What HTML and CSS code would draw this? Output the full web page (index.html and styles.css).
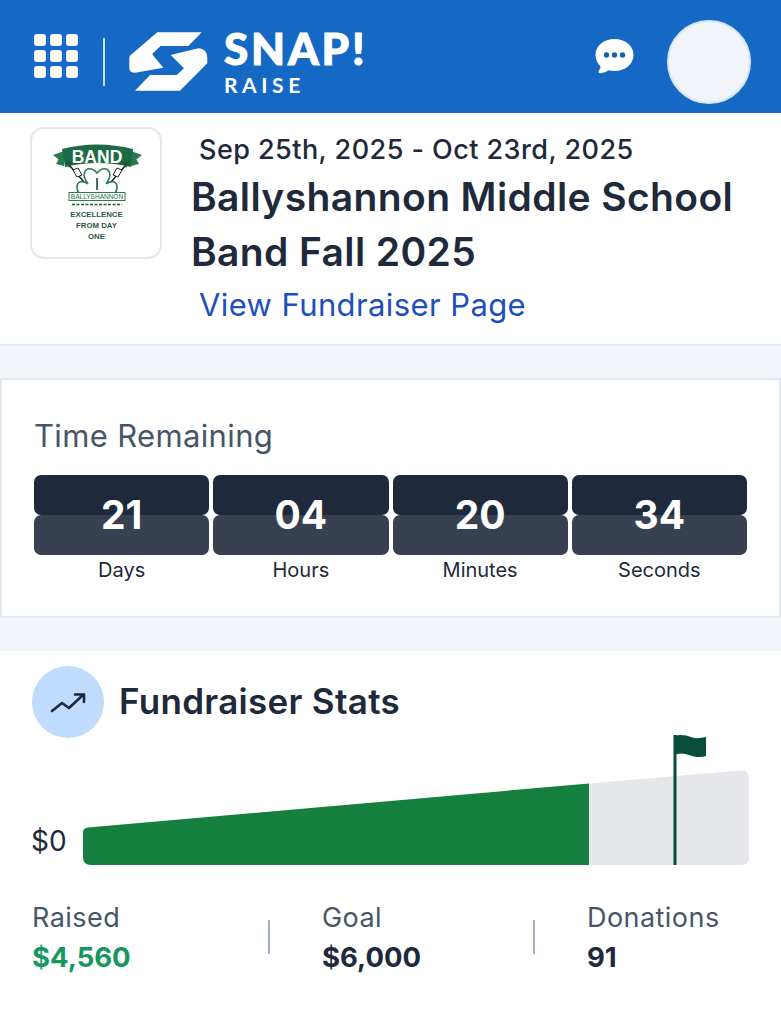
FILE: index.html
```html
<!DOCTYPE html>
<html lang="en">
<head>
<meta charset="utf-8">
<title>Snap! Raise</title>
<link rel="stylesheet" href="styles.css">
</head>
<body>
<header class="topbar">
  <div class="topbar-left">
    <div class="apps">
      <i></i><i></i><i></i><i></i><i></i><i></i><i></i><i></i><i></i>
    </div>
    <div class="divider"></div>
    <svg class="mark" width="100" height="80" viewBox="0 0 100 80">
      <path fill="#fff" d="M37.300 12.300H81.700L68.300 26H40.500L32.700 33.500V35L43.300 47.700L15 52.700Q9.300 52.700 9.300 48V38Q9.300 36.500 10.500 35.300Z"/>
      <path fill="#fff" d="M50.700 35L78.300 28.300Q87.300 29 87.300 38V43.300L60 70.700H15L30 55H56.700L64 48.300Z"/>
    </svg>
    <div class="wordmark">
      <span class="snap">SNAP!</span>
      <span class="raise">RAISE</span>
    </div>
  </div>
  <div class="topbar-right">
    <svg class="chat" width="40" height="38" viewBox="0 0 40 38">
      <path fill="#fff" d="M20.500 1C10 1 1.500 7.500 1.500 17C1.500 21.500 3.500 25.500 6.500 28.300C6.500 30.500 5.500 32 4.700 33C4 34 4.800 35.500 6.500 35.300C9.500 35 12.500 33.700 14.500 32.300C16.300 32.800 18.300 33 20.500 33C31 33 39.500 26.500 39.500 17C39.500 7.500 31 1 20.500 1Z"/>
      <circle cx="12.500" cy="17" r="2.700" fill="#1b5fa8"/>
      <circle cx="20.500" cy="17" r="2.700" fill="#1b5fa8"/>
      <circle cx="28.500" cy="17" r="2.700" fill="#1b5fa8"/>
    </svg>
    <div class="avatar"></div>
  </div>
</header>

<section class="summary">
  <div class="badge">
    <svg class="crest" width="100" height="104" viewBox="0 0 100 104">
      <path fill="#2a7a52" d="M7 16L18 12V27L10 25L12.500 20.500Z"/>
      <path fill="#2a7a52" d="M96 16L85 12V27L93 25L90.500 20.500Z"/>
      <path fill="#1d6b42" d="M16 10Q51 1 87 10L85 28Q51 20 19 28Z"/>
      <text class="band" x="51" y="23.500" text-anchor="middle">BAND</text>
      <path d="M24 27L38 43M79 27L65 43" stroke="#222" stroke-width="1.500" fill="none"/>
      <path d="M27 31L32 29L36 36L31 38ZM76 31L71 29L67 36L72 38Z" fill="#fff" stroke="#222" stroke-width="1"/>
      <path d="M19 22L27 23L23 29ZM84 22L76 23L80 29Z" fill="#1d5a3a"/>
      <path d="M51 34C46 28 39 28 38 36C38 39 40 42 42 45C37 41 31 42 31 48C31 51 32 53 33 54H69C70 53 71 51 71 48C71 42 65 41 60 45C62 42 64 39 64 36C63 28 56 28 51 34Z" fill="none" stroke="#2a7a55" stroke-width="1.600"/>
      <path d="M51 39V51" stroke="#1d4f38" stroke-width="1.600"/>
      <rect x="23" y="53.500" width="56" height="8" fill="#fff" stroke="#2a7a55" stroke-width="1"/>
      <text class="badge-name" x="51" y="60" text-anchor="middle">BALLYSHANNON</text>
      <path d="M26 65.500H76" stroke="#1d5a3a" stroke-width="1.600" stroke-dasharray="3 1.500"/>
      <text class="badge-line" x="50.500" y="77.500" text-anchor="middle">EXCELLENCE</text>
      <text class="badge-line" x="50.500" y="89" text-anchor="middle">FROM DAY</text>
      <text class="badge-line" x="50.500" y="100" text-anchor="middle">ONE</text>
    </svg>
  </div>
  <div class="summary-text">
    <p class="dates">Sep 25th, 2025 - Oct 23rd, 2025</p>
    <h1 class="title">Ballyshannon Middle School Band Fall 2025</h1>
    <a class="page-link" href="#">View Fundraiser Page</a>
  </div>
</section>

<section class="timer">
  <h2 class="timer-title">Time Remaining</h2>
  <div class="timer-grid">
    <div class="unit"><div class="flip"><span class="flip-top"></span><span class="flip-bottom"></span><b class="flip-num">21</b></div><span class="unit-label">Days</span></div>
    <div class="unit"><div class="flip"><span class="flip-top"></span><span class="flip-bottom"></span><b class="flip-num">04</b></div><span class="unit-label">Hours</span></div>
    <div class="unit"><div class="flip"><span class="flip-top"></span><span class="flip-bottom"></span><b class="flip-num">20</b></div><span class="unit-label">Minutes</span></div>
    <div class="unit"><div class="flip"><span class="flip-top"></span><span class="flip-bottom"></span><b class="flip-num">34</b></div><span class="unit-label">Seconds</span></div>
  </div>
</section>

<section class="stats">
  <div class="stats-head">
    <div class="stats-icon">
      <svg width="40" height="40" viewBox="0 0 40 40" fill="none" stroke="#1e293b" stroke-width="2.600" stroke-linecap="round" stroke-linejoin="round">
        <path d="M4 29L14 21L21 26L35 13"/>
        <path d="M27 12.500H36V20"/>
      </svg>
    </div>
    <h2 class="stats-title">Fundraiser Stats</h2>
  </div>
  <div class="chart-row">
    <span class="zero">$0</span>
    <svg class="chart" width="666" height="130" viewBox="0 0 666 130">
      <path fill="#e5e7eb" d="M506 48.500L657 35.500Q666 34.700 666 43V122Q666 130 658 130H506Z"/>
      <path fill="#15803d" d="M5 92.500L506 48.500V130H8Q0 130 0 122V97Q0 93 5 92.500Z"/>
      <rect x="590.500" y="0" width="3" height="130" fill="#064e3b"/>
      <path fill="#064e3b" d="M591 1C597 -1 603 0 608 2C613 4 618 3 623 2V21C617 23 611 22 606 20C601 18 596 18 591 20Z"/>
    </svg>
  </div>
  <div class="totals">
    <div class="total total-raised"><span class="total-label">Raised</span><b class="total-value raised">$4,560</b></div>
    <div class="sep"></div>
    <div class="total total-goal"><span class="total-label">Goal</span><b class="total-value">$6,000</b></div>
    <div class="sep"></div>
    <div class="total"><span class="total-label">Donations</span><b class="total-value">91</b></div>
  </div>
</section>
</body>
</html>
```
FILE: styles.css
```css
* { box-sizing: border-box; }
html, body { margin: 0; padding: 0; }
body {
  width: 781px;
  height: 1024px;
  overflow: hidden;
  background: #f1f5f9;
  font-family: Inter, "Liberation Sans", sans-serif;
  color: #1e293b;
}
h1, h2, p { margin: 0; }

.topbar {
  height: 113px;
  background: #1569c4;
  display: flex;
  justify-content: space-between;
  align-items: center;
  padding: 11px 30px 0 34px;
}
.topbar-left { display: flex; align-items: center; }
.topbar-right { display: flex; align-items: center; gap: 33px; }
.apps {
  display: grid;
  grid-template-columns: repeat(3, 12px);
  grid-auto-rows: 12px;
  gap: 4px;
  margin-bottom: 12px;
}
.apps i { background: #fff; border-radius: 3px; }
.divider { width: 2px; height: 48px; background: #cfe3f7; margin: 0 15px 0 25px; }
.mark { display: block; margin: 0 4px 4px 0; }
.wordmark { display: flex; flex-direction: column; color: #fff; margin-bottom: 1px; }
.snap { font-family: Lato, sans-serif; font-weight: 900; font-size: 44px; line-height: 44px; letter-spacing: 2.800px; -webkit-text-stroke: 1px #fff; }
.raise { font-family: Lato, sans-serif; font-weight: 700; font-size: 21px; line-height: 24px; letter-spacing: 4.600px; margin-top: 3px; }
.chat { display: block; margin-bottom: 10px; }
.avatar {
  width: 84px;
  height: 84px;
  margin-bottom: 1px;
  border-radius: 50%;
  background: #f1f5f9;
  border: 2px solid #d5e5f7;
}

.summary {
  height: 233px;
  background: #fff;
  border-bottom: 2px solid #e2e8f0;
  display: flex;
  padding: 14px 20px 0 30px;
}
.badge {
  width: 132px;
  height: 132px;
  flex: none;
  background: #fff;
  border: 2px solid #e5e7eb;
  border-radius: 14px;
  display: flex;
  align-items: center;
  justify-content: center;
}
.crest { display: block; margin-bottom: 4px; }
.band { font-family: "Liberation Sans", sans-serif; font-weight: 700; font-size: 17.500px; fill: #fff; }
.badge-name { font-family: "Liberation Sans", sans-serif; font-size: 6.500px; fill: #1d6b42; }
.badge-line { font-family: "Liberation Sans", sans-serif; font-weight: 700; font-size: 7.800px; fill: #2a5a45; }
.summary-text { margin-left: 29px; display: flex; flex-direction: column; align-items: flex-start; }
.dates { font-size: 27px; font-weight: 500; line-height: 45px; margin-left: 8px; letter-spacing: 0.450px; }
.title { font-size: 39px; font-weight: 600; line-height: 55px; margin-top: -3px; letter-spacing: 0.380px; }
.page-link { font-size: 31px; line-height: 48px; margin: 2px 0 0 8px; color: #1e4fc0; text-decoration: none; letter-spacing: 0.400px; }

.timer {
  height: 240px;
  margin-top: 32px;
  background: #fff;
  border: 2px solid #e2e8f0;
  padding: 37px 32px 0;
}
.timer-title { font-size: 31px; font-weight: 400; line-height: 38px; color: #475569; margin-bottom: 20px; letter-spacing: 0.350px; }
.timer-grid { display: grid; grid-template-columns: repeat(4, 175.250px); gap: 4px; }
.unit { display: flex; flex-direction: column; align-items: center; }
.flip { position: relative; width: 100%; height: 79.500px; margin-bottom: 0.500px; display: flex; flex-direction: column; }
.flip-top, .flip-bottom { display: block; height: 39.750px; border-radius: 7px; }
.flip-top { background: #1e293b; }
.flip-bottom { background: #374151; }
.flip-num {
  position: absolute;
  inset: 0 0 1px;
  display: flex;
  align-items: center;
  justify-content: center;
  font-size: 39px;
  font-weight: 700;
  color: #fff;
}
.unit-label { font-size: 20px; line-height: 30px; }

.stats { margin-top: 33px; height: 373px; background: #fff; padding: 15px 32px 0; }
.stats-head { display: flex; align-items: center; gap: 15px; }
.stats-icon {
  width: 72px;
  height: 72px;
  border-radius: 50%;
  background: #bfdbfe;
  display: flex;
  align-items: center;
  justify-content: center;
}
.stats-title { font-size: 35px; font-weight: 600; line-height: 70px; letter-spacing: 0.300px; margin-bottom: 2px; }
.chart-row { display: flex; align-items: flex-end; margin-top: -3px; }
.zero { width: 51px; font-size: 28px; line-height: 34px; margin-bottom: 7px; margin-left: -1px; margin-right: 1px; }
.chart { display: block; overflow: visible; }
.totals { display: flex; align-items: center; margin-top: 35px; }
.total { display: flex; flex-direction: column; }
.total-label { font-size: 27px; line-height: 36px; color: #475569; letter-spacing: 0.450px; }
.total-value { font-size: 27.500px; font-weight: 700; line-height: 40px; margin-top: 1px; }
.raised { color: #15975f; }
.total-raised { width: 236px; }
.total-goal { width: 211px; }
.sep { width: 2px; height: 34px; background: #a3aec2; margin: 0 52px 4px 0; }
```
